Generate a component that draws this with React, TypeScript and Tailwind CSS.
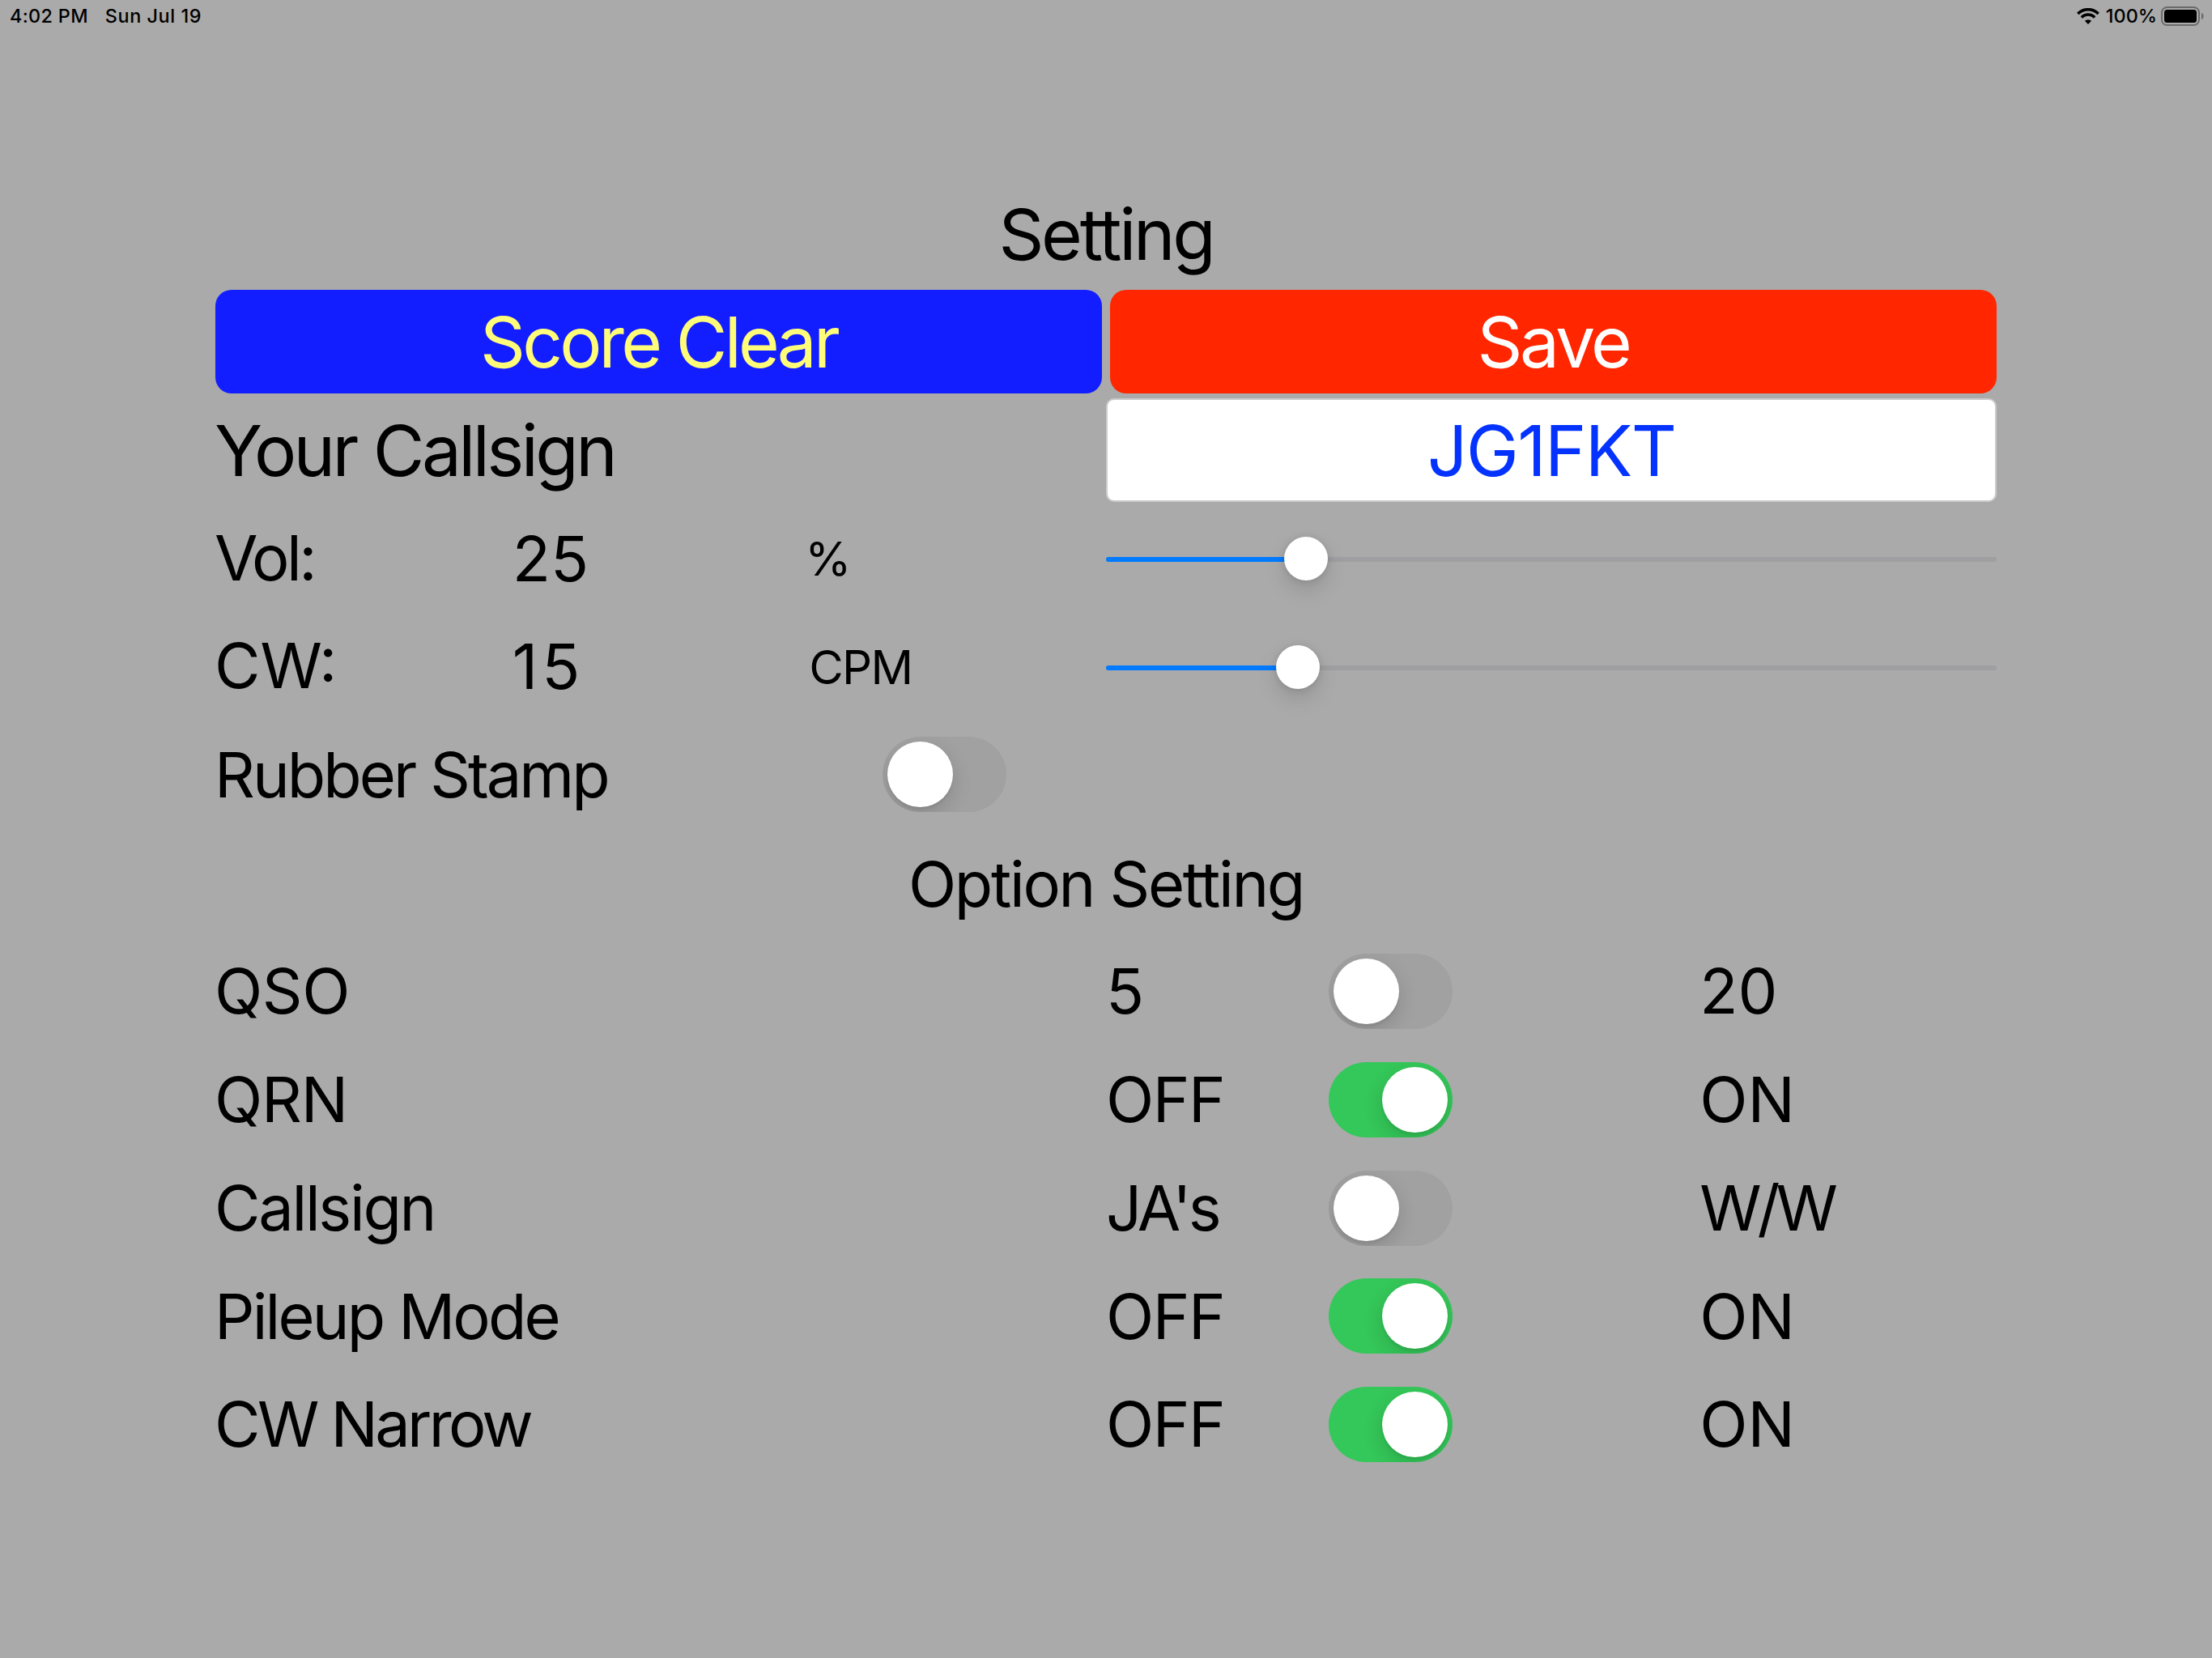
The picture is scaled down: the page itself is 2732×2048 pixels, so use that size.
import type { ReactNode } from "react";

const Toggle = ({ on = false }: { on?: boolean }) => (
  <div
    className={`flex h-[93px] w-[153px] shrink-0 items-center overflow-hidden rounded-full px-[6px] ${
      on ? "justify-end bg-[#34c759]" : "justify-start bg-[#a1a1a1]"
    }`}
  >
    <div className="size-[81px] rounded-full bg-white shadow-[0_9px_24px_rgba(0,0,0,0.15),0_3px_3px_rgba(0,0,0,0.06)]" />
  </div>
);

const Slider = ({ value }: { value: number }) => (
  <div className="relative mt-[3px] flex h-[54px] w-full items-center">
    <div className="h-[6px] w-full overflow-hidden rounded-full bg-[#9f9fa1]">
      <div className="h-full bg-[#007aff]" style={{ width: `${value}px` }} />
    </div>
    <div
      className="absolute -top-px size-[54px] rounded-full bg-white shadow-[0_12px_26px_rgba(0,0,0,0.13),0_1px_8px_rgba(0,0,0,0.12)]"
      style={{ left: `${value - 27}px` }}
    />
  </div>
);

const Half = ({ children }: { children: ReactNode }) => (
  <div className="flex w-1/2 items-center">{children}</div>
);

const Label = ({ className = "", children }: { className?: string; children: ReactNode }) => (
  <span className={`-ml-px pt-[2px] ${className}`}>{children}</span>
);

const levels = [
  { label: "Vol:", labelClass: "tracking-[-0.045em]", amount: "25", amountClass: "", unit: "%", unitClass: "-ml-[5px]", value: 247 },
  { label: "CW:", labelClass: "", amount: "15", amountClass: "tracking-[0.065em]", unit: "CPM", unitClass: "tracking-[-0.03em]", value: 237 },
];

const options = [
  { label: "QSO", labelClass: "tracking-[-0.005em]", left: "5", leftClass: "", right: "20", rightClass: "", on: false },
  { label: "QRN", labelClass: "tracking-[-0.015em]", left: "OFF", leftClass: "tracking-[-0.02em]", right: "ON", rightClass: "", on: true },
  { label: "Callsign", labelClass: "tracking-[-0.03em]", left: "JA's", leftClass: "tracking-[-0.05em]", right: "W/W", rightClass: "tracking-[-0.065em]", on: false },
  { label: "Pileup Mode", labelClass: "tracking-[-0.037em]", left: "OFF", leftClass: "tracking-[-0.02em]", right: "ON", rightClass: "", on: true },
  { label: "CW Narrow", labelClass: "tracking-[-0.048em]", left: "OFF", leftClass: "tracking-[-0.02em]", right: "ON", rightClass: "", on: true },
];

const StatusBar = () => (
  <header className="flex h-10 items-center justify-between pr-[9px] pl-3 text-[23.4px] font-medium">
    <div className="flex gap-[21px]">
      <span className="tracking-[0.014em]">4:02 PM</span>
      <span className="tracking-[0.024em]">Sun Jul 19</span>
    </div>
    <div className="flex items-center">
      <svg className="mr-2 h-[20px] w-[28px]" viewBox="0 0 28 20" fill="none" stroke="#000" strokeWidth="3.5">
        <path d="M1.3 6.9a18 18 0 0 1 25.4 0" />
        <path d="M5.8 11.5a11.6 11.6 0 0 1 16.4 0" />
        <path d="M14 20l-4.1-4.2a5.9 5.9 0 0 1 8.2 0z" fill="#000" stroke="none" />
      </svg>
      <span>100%</span>
      <svg className="ml-[5px] h-6 w-[54px]" viewBox="0 0 54 24" fill="none">
        <rect x="1" y="1" width="46" height="22" rx="6.5" stroke="#6b6b6b" strokeWidth="2" />
        <rect x="4" y="4" width="40" height="16" rx="3.5" fill="#000" />
        <path d="M50 8c3.4 1 3.4 7 0 8z" fill="#6b6b6b" />
      </svg>
    </div>
  </header>
);

export default function App() {
  return (
    <div className="h-[2048px] w-[2732px] overflow-hidden bg-[#aaaaaa] font-[Inter,sans-serif] text-black">
      <StatusBar />

      <main className="mx-auto mt-[184.4px] grid w-[2200px] auto-rows-[128px] gap-[5.7px] text-[77.5px] leading-none">
        <h1 className="flex items-center justify-center pt-[2px] text-[87.2px] tracking-[-0.037em]">Setting</h1>

        <div className="flex gap-[10px] text-[87.2px]">
          <button className="flex-1 rounded-[20px] bg-[#121eff] pt-[2px] tracking-[-0.044em] text-[#fffc79]">
            Score Clear
          </button>
          <button className="flex-1 rounded-[20px] bg-[#ff2600] pt-[2px] tracking-[-0.04em] text-white">Save</button>
        </div>

        <div className="flex text-[87.2px]">
          <Half>
            <Label className="tracking-[-0.041em]">Your Callsign</Label>
          </Half>
          <div className="flex w-1/2 items-center justify-center rounded-[10px] border-2 border-[#cbcbcb] bg-white pt-[2px] tracking-[-0.019em] text-[#0433ff]">
            JG1FKT
          </div>
        </div>

        {levels.map((level) => (
          <div key={level.label} className="flex">
            <Half>
              <div className="w-1/3">
                <Label className={level.labelClass}>{level.label}</Label>
              </div>
              <div className="w-1/3 pt-[2px]">
                <span className={level.amountClass}>{level.amount}</span>
              </div>
              <div className="w-1/3 pt-[2px] text-[58.2px]">
                <span className={level.unitClass}>{level.unit}</span>
              </div>
            </Half>
            <Half>
              <Slider value={level.value} />
            </Half>
          </div>
        ))}

        <div className="flex items-center">
          <div className="w-[824px] pt-[2px]">
            <Label className="tracking-[-0.038em]">Rubber Stamp</Label>
          </div>
          <Toggle />
        </div>

        <h2 className="flex items-center justify-center pt-[4px] tracking-[-0.03em]">Option Setting</h2>

        {options.map((option) => (
          <div key={option.label} className="flex">
            <Half>
              <Label className={option.labelClass}>{option.label}</Label>
            </Half>
            <Half>
              <div className="w-1/4 pt-[2px]">
                <span className={option.leftClass}>{option.left}</span>
              </div>
              <div className="w-[458.3px] pt-px">
                <Toggle on={option.on} />
              </div>
              <div className="pt-[2px]">
                <span className={option.rightClass}>{option.right}</span>
              </div>
            </Half>
          </div>
        ))}
      </main>
    </div>
  );
}
